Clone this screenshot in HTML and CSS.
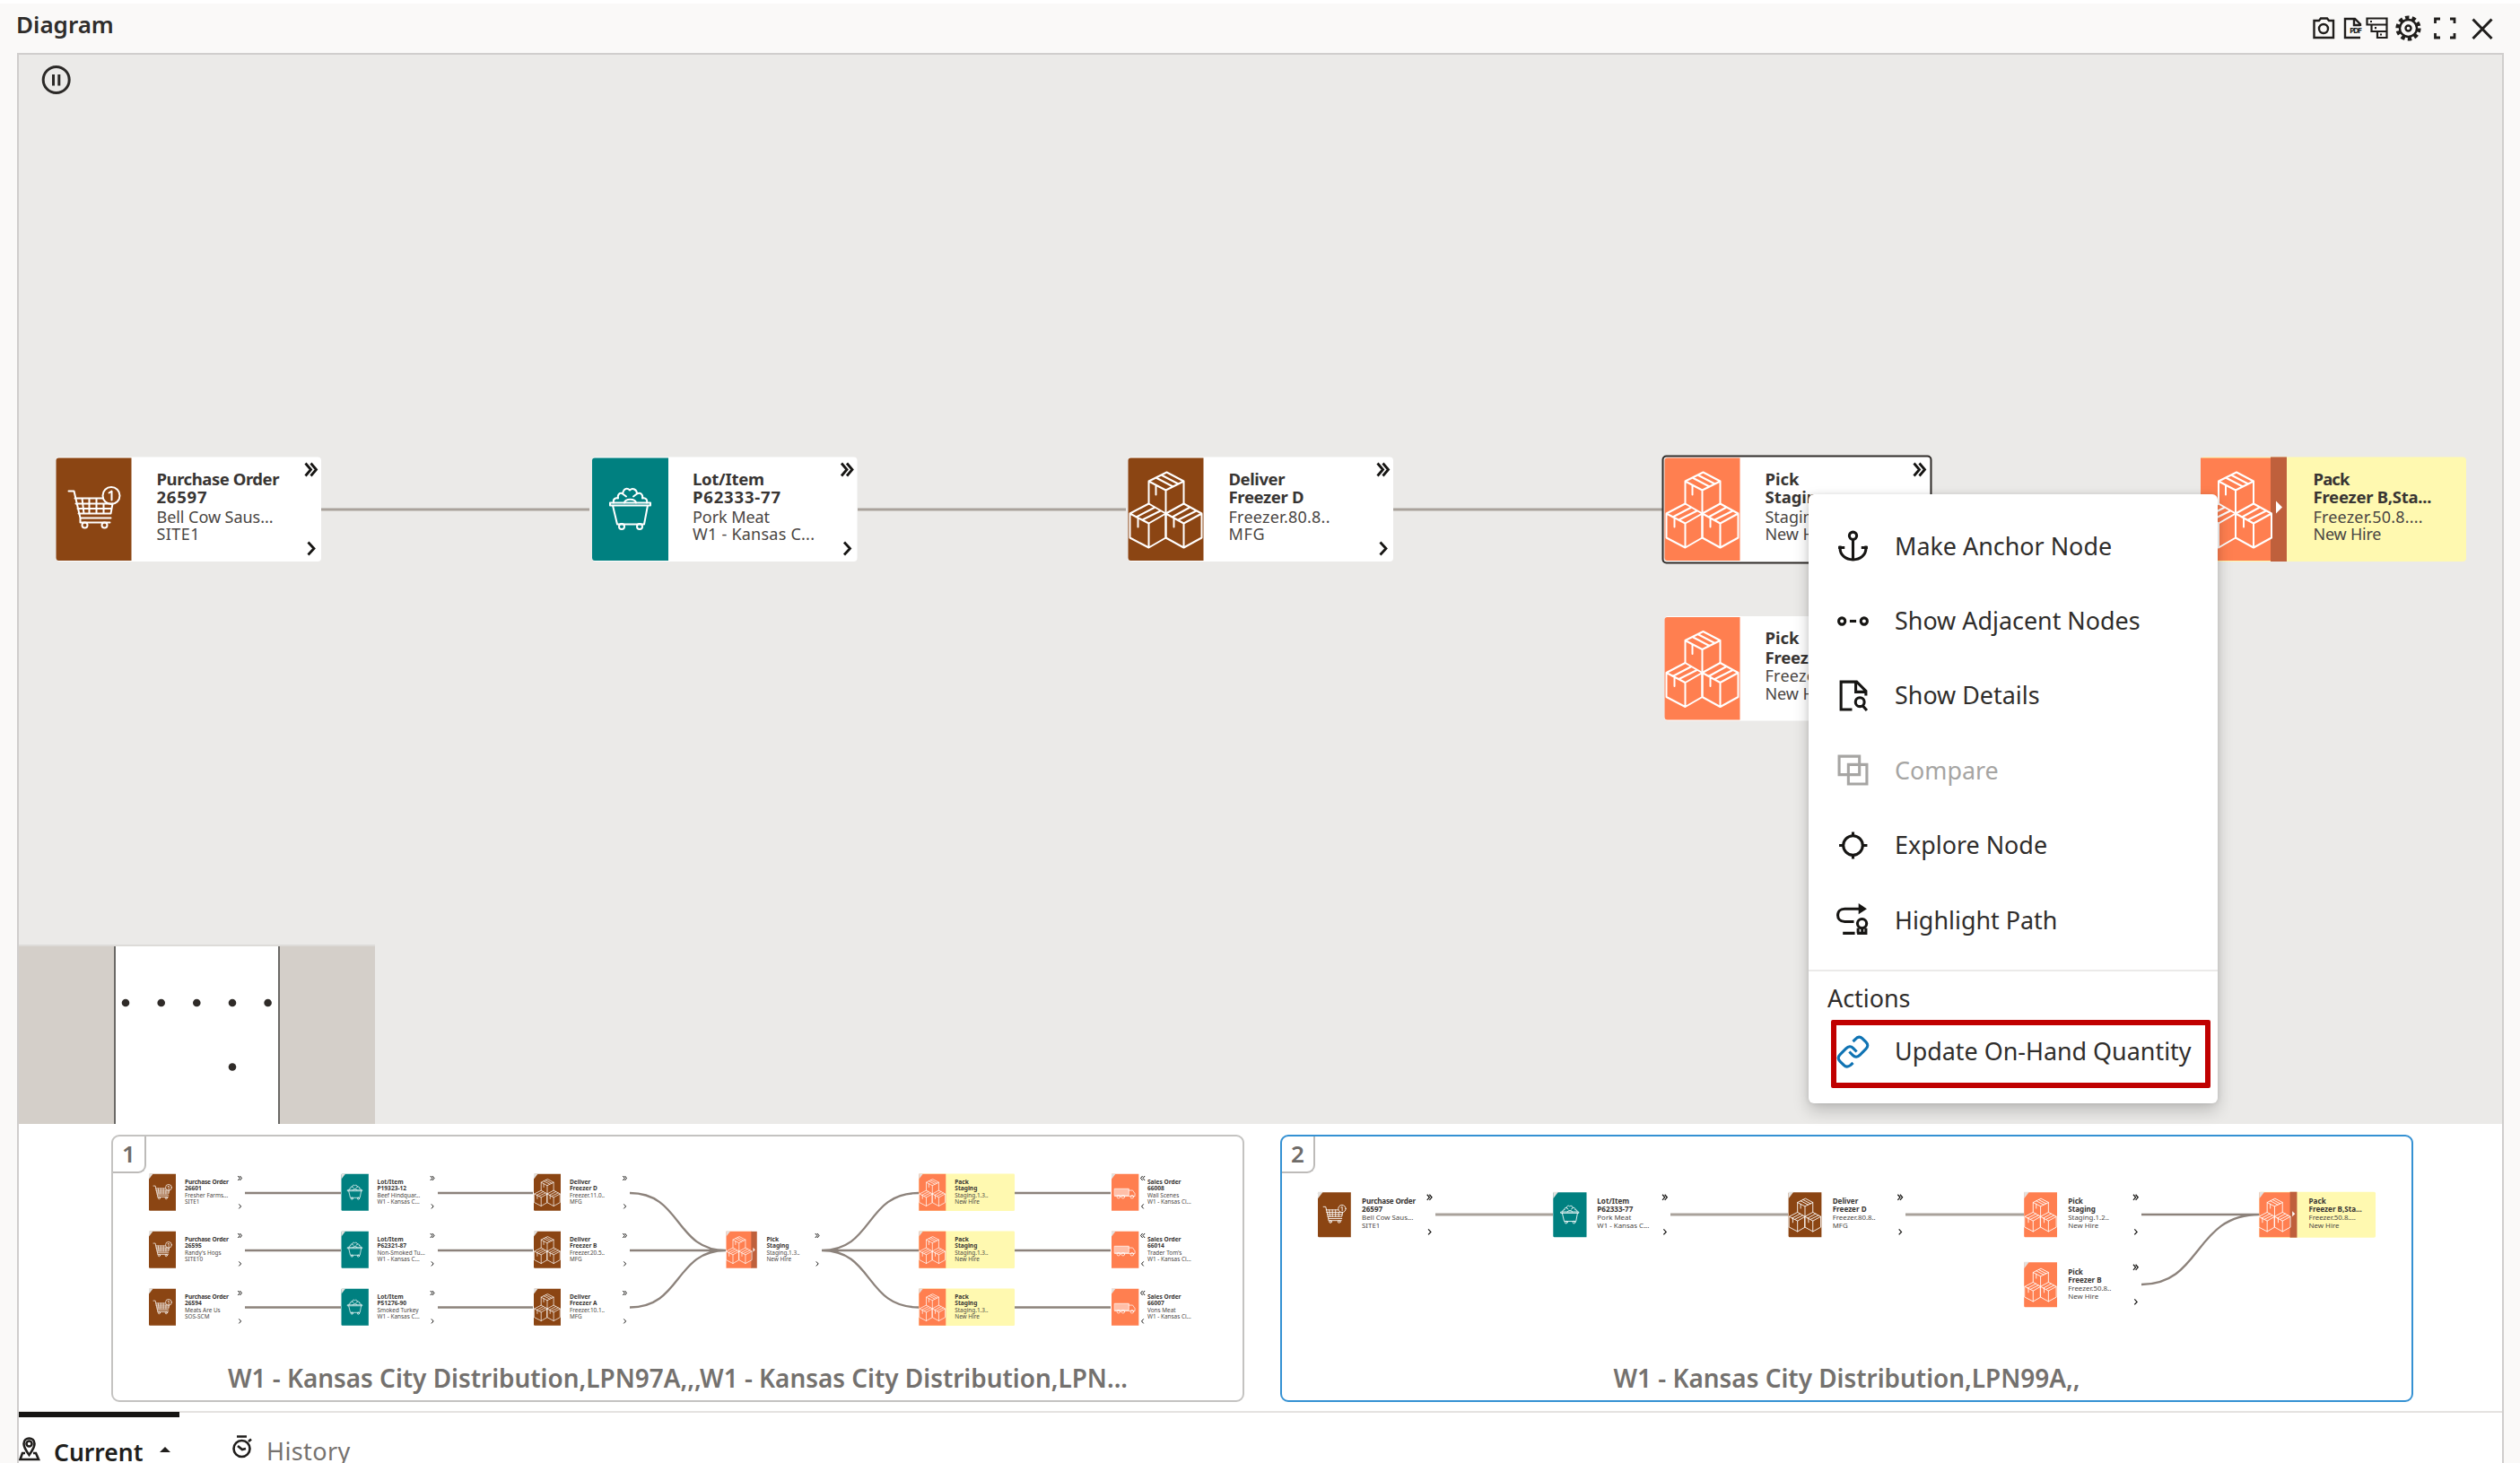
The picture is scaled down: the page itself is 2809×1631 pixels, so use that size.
FILE: index.html
```html
<!DOCTYPE html>
<html lang="en">
<head>
<meta charset="utf-8">
<title>Diagram</title>
<link rel="stylesheet" href="styles.css">
</head>
<body>
<svg class="defs" width="0" height="0" aria-hidden="true">
  <defs>
    <g id="boxes" class="glyph">
      <path d="M23 52V27L43 17L62 27V52M23 27L42 37L62 27M42 37V63M31 23L50 33M37 20L56 30M31 31V42"/>
      <path d="M2 63L23 52L42 63V90L23 101L2 90ZM2 63L23 74L42 63M23 74V101M9 67L30 56M16 70L36 60M11 68V78"/>
      <path d="M42 63L62 52L82 63V90L62 101L42 90ZM42 63L62 74L82 63M62 74V101M49 67L69 56M56 70L76 60M51 68V78"/>
    </g>
    <g id="cart" class="glyph">
      <path d="M14 38H20L27 68H61M21 46H52M22 52H63M24 57.500H62M25 63H61L63 52M29 46L31 63M37 46V63M45 46V63M53 52V63M27 68V73H60"/>
      <circle cx="32" cy="76" r="3"/><circle cx="54" cy="76" r="3"/>
      <circle cx="61.500" cy="43" r="9.500"/><path d="M59 40L62 38V48"/>
    </g>
    <g id="mine" class="glyph">
      <path d="M20 51H65V54H20ZM23 54L28 75H58L62 54"/>
      <path d="M24 51C23 47 26 45 29 46C28 42 31 39 34 41C35 35 39 34 42 37C45 34 50 36 50 41C54 39 57 42 56 46C60 45 62 48 61 51M36 51C37 46 48 46 49 51M34 41L38 44M50 41L46 44"/>
      <circle cx="33" cy="77.500" r="3"/><circle cx="53" cy="77.500" r="3"/>
    </g>
    <g id="truck" class="glyph">
      <path class="load" d="M10 47H54V68H10Z"/>
      <path d="M54 52H66L73 62V70H10"/>
      <circle cx="22" cy="72" r="5"/><circle cx="36" cy="72" r="5"/><circle cx="64" cy="72" r="5"/>
    </g>
    <g id="next" class="chev"><path d="M278 7L284 14L278 21M284 7L290 14L284 21M281 95L287.500 102L281 109"/></g>
    <g id="prev" class="chev"><path d="M97 7L91 14L97 21M104 7L98 14L104 21M100 95L94 102L100 109"/></g>
    <g id="n-po"><rect class="card" width="295.500" height="116.500" rx="4"/><path class="brown" d="M84 1V115.500H3Q0 115.500 0 112V4Q0 1 3 1Z"/><use href="#cart"/><use href="#next"/></g>
    <g id="n-lot"><rect class="card" width="295.500" height="116.500" rx="4"/><path class="teal" d="M85 1V115.500H3Q0 115.500 0 112V4Q0 1 3 1Z"/><use href="#mine"/><use href="#next"/></g>
    <g id="n-del"><rect class="card" width="295.500" height="116.500" rx="4"/><path class="brown" d="M84 1V115.500H3Q0 115.500 0 112V4Q0 1 3 1Z"/><use href="#boxes"/><use href="#next"/></g>
    <g id="n-pick"><rect class="card" width="295.500" height="116.500" rx="4"/><path class="coral" d="M84 1V115.500H3Q0 115.500 0 112V4Q0 1 3 1Z"/><use href="#boxes"/><use href="#next"/></g>
    <g id="n-pickx"><rect class="card" width="295.500" height="116.500" rx="4"/><path class="coral" d="M0 1H80V115.500H0Z"/><path class="rust" d="M78 1H96V115.500H78Z"/><path class="arrow" d="M84 51L90 58L84 65Z"/><use href="#boxes" transform="translate(-2 0)"/><use href="#next"/></g>
    <g id="n-pack"><rect class="lemon" width="299" height="116.500" rx="4"/><path class="coral" d="M0 1H84V115.500H0Z"/><use href="#boxes"/></g>
    <g id="n-packx"><rect class="lemon" width="296" height="116.500" rx="4"/><path class="coral" d="M0 1H80V115.500H0Z"/><path class="rust" d="M78 0H96V116.500H78Z"/><path class="arrow" d="M84 49L91 56L84 63Z"/><use href="#boxes" transform="translate(-3 0)"/></g>
    <g id="n-so"><rect class="card" width="299" height="116.500" rx="4"/><path class="coral" d="M0 1H85V115.500H0Z"/><use href="#truck"/><use href="#prev"/></g>
    <path id="fold" class="fold" d="M0 0H13L0 17Z"/>
  </defs>
</svg>

<header class="topbar">
  <h1 class="title">Diagram</h1>
  <div class="tools">
    <svg viewBox="2576 16 204 32" width="204" height="32">
      <g class="tool">
        <path d="M2579.500 23H2585L2587 20.500H2594L2596 23H2601V42H2579.500Z"/><circle cx="2590" cy="32" r="5"/>
        <path d="M2631 42H2614V21H2625L2631 27V29M2624 21V28H2631"/>
        <path class="tree" d="M2638.500 20.500H2660.500V42H2650V35H2643.500V27.500H2638.500ZM2643.500 27.500H2660.500M2650 35H2660.500M2642 24H2644M2647 31.200H2649M2653 38.500H2655"/>
        <circle class="gear" cx="2684.500" cy="31.500" r="11.600"/><circle cx="2684.500" cy="31.500" r="9.500"/><circle cx="2684.500" cy="31.500" r="3"/>
        <path class="frame" d="M2714.500 26V21H2720M2731 21H2736V26M2736 37V42H2731M2720 42H2714.500V37"/>
        <path class="close" d="M2756.500 21.500L2777.500 43M2777.500 21.500L2756.500 43"/>
      </g>
      <text class="pdf" x="2619" y="37" textLength="14">PDF</text>
    </svg>
  </div>
</header>

<main class="panel">
  <section class="canvas">
    <svg class="graph" viewBox="21 61 2768 1191" width="2768" height="1191">
      <g class="pause"><circle cx="62.700" cy="89" r="14.500"/><path d="M59.500 83V95.500M65.800 83V95.500"/></g>
      <path class="edge" d="M358 568H657M956 568H1255M1553 568H1853"/>
      <g transform="translate(62.500 509.500)"><use href="#n-po"/>
        <text class="t" x="112" y="31" textLength="137">Purchase Order</text><text class="t" x="112" y="51.500" textLength="56">26597</text><text class="s" x="112" y="73" textLength="130">Bell Cow Saus...</text><text class="s" x="112" y="92.500" textLength="48">SITE1</text></g>
      <g transform="translate(660 509.500)"><use href="#n-lot"/>
        <text class="t" x="112" y="31" textLength="80">Lot/Item</text><text class="t" x="112" y="51.500" textLength="98">P62333-77</text><text class="s" x="112" y="73" textLength="86">Pork Meat</text><text class="s" x="112" y="92.500" textLength="136">W1 - Kansas C...</text></g>
      <g transform="translate(1257.500 509.500)"><use href="#n-del"/>
        <text class="t" x="112" y="31" textLength="63">Deliver</text><text class="t" x="112" y="51.500" textLength="84">Freezer D</text><text class="s" x="112" y="73" textLength="113">Freezer.80.8..</text><text class="s" x="112" y="92.500" textLength="40">MFG</text></g>
      <g transform="translate(1855.500 509.500)"><use href="#n-pick"/><rect class="selected" x="-2" y="-1" width="299" height="119" rx="4"/>
        <text class="t" x="112" y="31" textLength="38">Pick</text><text class="t" x="112" y="51.500" textLength="70">Staging</text><text class="s" x="112" y="73" textLength="104">Staging.1.2..</text><text class="s" x="112" y="92.500" textLength="77">New Hire</text></g>
      <g transform="translate(1855.500 687)"><use href="#n-pick"/>
        <text class="t" x="112" y="31" textLength="38">Pick</text><text class="t" x="112" y="53" textLength="84">Freezer B</text><text class="s" x="112" y="73" textLength="113">Freezer.50.8..</text><text class="s" x="112" y="92.500" textLength="77">New Hire</text></g>
      <g transform="translate(2453 509.500)"><use href="#n-packx"/>
        <text class="t" x="125.500" y="31" textLength="41">Pack</text><text class="t" x="125.500" y="51.500" textLength="132">Freezer B,Sta...</text><text class="s" x="125.500" y="73" textLength="122">Freezer.50.8....</text><text class="s" x="125.500" y="92.500" textLength="76">New Hire</text></g>
    </svg>

    <div class="minimap">
      <svg viewBox="129 1054 181 198" width="181" height="198">
        <circle cx="140" cy="1117" r="4.300"/><circle cx="179.700" cy="1117" r="4.300"/><circle cx="219.300" cy="1117" r="4.300"/><circle cx="259" cy="1117" r="4.300"/><circle cx="298.600" cy="1117" r="4.300"/><circle cx="259" cy="1188.500" r="4.300"/>
      </svg>
    </div>

    <div class="menu">
      <div class="item"><svg viewBox="0 0 36 36"><circle cx="18" cy="7" r="4"/><path d="M18 11V33M4 18V21C4 28 10 33 18 33S32 28 32 21V18M2 20H9M27 20H34"/></svg><span>Make Anchor Node</span></div>
      <div class="item"><svg viewBox="0 0 36 36"><circle cx="6" cy="18" r="3.500"/><circle cx="30" cy="18" r="3.500"/><path d="M14.500 18H21.500"/></svg><span>Show Adjacent Nodes</span></div>
      <div class="item"><svg viewBox="0 0 36 36"><path d="M17 33H5V3H22L32 13V18M21 3V14H32"/><circle cx="25.500" cy="25" r="4.800"/><path d="M28.500 29L33 34"/></svg><span>Show Details</span></div>
      <div class="item off"><svg viewBox="0 0 36 36"><path d="M3 3H25V23H3ZM13 12H33V33H13Z"/></svg><span>Compare</span></div>
      <div class="item"><svg viewBox="0 0 36 36"><circle cx="18" cy="18" r="10.500"/><path d="M18 3.500V8M18 28V32.500M3 18H8M28 18H33.500"/></svg><span>Explore Node</span></div>
      <div class="item"><svg viewBox="0 0 36 36"><path d="M26 6H9C-1 6-1 20 9 20H19M7 32.500H20M23.500 32.500V27M32 32.500V27M22.500 32.500H33.500M28 28V32"/><path class="solid" d="M24 0L33 6L24 12Z"/><circle cx="27.800" cy="22" r="5"/></svg><span>Highlight Path</span></div>
      <div class="group">
        <div class="heading">Actions</div>
        <div class="item link"><svg viewBox="0 0 36 36"><path d="M18 7L21 4C23 1.500 26 1.500 28 3.500L32 7.500C34.500 10 34.500 12.500 32 15L25.500 21.500C23 24 20 24 18 22L14 18M18 30L15.500 32.500C13 34.500 10 34.500 8 32.500L4 28.500C1.500 26 1.500 23.500 4 21L10.500 14.500C13 12 16 12 18 14L22 18"/></svg><span>Update On-Hand Quantity</span></div>
      </div>
      <div class="callout"></div>
    </div>
  </section>

  <section class="paths">
    <article class="path">
      <span class="badge">1</span>
      <svg viewBox="126 1268 1259 246" width="1259" height="246">
        <path class="thin" d="M273 1331H380M273 1395H380M273 1458.500H380M488 1331H594M488 1395H594M488 1458.500H594M702 1331C760 1331 752 1395 809 1395M702 1395H809M702 1458.500C760 1458.500 752 1395 809 1395M916 1395C974 1395 964 1331 1024 1331M916 1395H1024M916 1395C974 1395 964 1458.500 1024 1458.500M1131 1331H1238M1131 1395H1238M1131 1458.500H1238"/>
        <g transform="translate(166 1309.500) scale(.357)"><use href="#n-po"/><use href="#fold"/><text class="t" x="112" y="32" textLength="137">Purchase Order</text><text class="t" x="112" y="53">26601</text><text class="s" x="112" y="74">Fresher Farms...</text><text class="s" x="112" y="94">SITE1</text></g>
        <g transform="translate(166 1373.500) scale(.357)"><use href="#n-po"/><use href="#fold"/><text class="t" x="112" y="32" textLength="137">Purchase Order</text><text class="t" x="112" y="53">26595</text><text class="s" x="112" y="74">Randy's Hogs</text><text class="s" x="112" y="94">SITE10</text></g>
        <g transform="translate(166 1437.500) scale(.357)"><use href="#n-po"/><use href="#fold"/><text class="t" x="112" y="32" textLength="137">Purchase Order</text><text class="t" x="112" y="53">26594</text><text class="s" x="112" y="74">Meats Are Us</text><text class="s" x="112" y="94">SOS-SCM</text></g>
        <g transform="translate(380.500 1309.500) scale(.357)"><use href="#n-lot"/><use href="#fold"/><text class="t" x="112" y="32">Lot/Item</text><text class="t" x="112" y="53">P19323-12</text><text class="s" x="112" y="74">Beef Hindquar...</text><text class="s" x="112" y="94">W1 - Kansas C...</text></g>
        <g transform="translate(380.500 1373.500) scale(.357)"><use href="#n-lot"/><use href="#fold"/><text class="t" x="112" y="32">Lot/Item</text><text class="t" x="112" y="53">P62321-87</text><text class="s" x="112" y="74">Non-Smoked Tu...</text><text class="s" x="112" y="94">W1 - Kansas C...</text></g>
        <g transform="translate(380.500 1437.500) scale(.357)"><use href="#n-lot"/><use href="#fold"/><text class="t" x="112" y="32">Lot/Item</text><text class="t" x="112" y="53">P51276-90</text><text class="s" x="112" y="74">Smoked Turkey</text><text class="s" x="112" y="94">W1 - Kansas C...</text></g>
        <g transform="translate(595 1309.500) scale(.357)"><use href="#n-del"/><use href="#fold"/><text class="t" x="112" y="32">Deliver</text><text class="t" x="112" y="53">Freezer D</text><text class="s" x="112" y="74">Freezer.11.0..</text><text class="s" x="112" y="94">MFG</text></g>
        <g transform="translate(595 1373.500) scale(.357)"><use href="#n-del"/><use href="#fold"/><text class="t" x="112" y="32">Deliver</text><text class="t" x="112" y="53">Freezer B</text><text class="s" x="112" y="74">Freezer.20.5..</text><text class="s" x="112" y="94">MFG</text></g>
        <g transform="translate(595 1437.500) scale(.357)"><use href="#n-del"/><use href="#fold"/><text class="t" x="112" y="32">Deliver</text><text class="t" x="112" y="53">Freezer A</text><text class="s" x="112" y="74">Freezer.10.1..</text><text class="s" x="112" y="94">MFG</text></g>
        <g transform="translate(809.500 1373.500) scale(.357)"><use href="#n-pickx"/><use href="#fold"/><text class="t" x="126" y="32">Pick</text><text class="t" x="126" y="53">Staging</text><text class="s" x="126" y="74">Staging.1.3..</text><text class="s" x="126" y="94">New Hire</text></g>
        <g transform="translate(1024.300 1309.500) scale(.357)"><use href="#n-pack"/><use href="#fold"/><text class="t" x="112" y="32">Pack</text><text class="t" x="112" y="53">Staging</text><text class="s" x="112" y="74">Staging.1.3..</text><text class="s" x="112" y="94">New Hire</text></g>
        <g transform="translate(1024.300 1373.500) scale(.357)"><use href="#n-pack"/><use href="#fold"/><text class="t" x="112" y="32">Pack</text><text class="t" x="112" y="53">Staging</text><text class="s" x="112" y="74">Staging.1.3..</text><text class="s" x="112" y="94">New Hire</text></g>
        <g transform="translate(1024.300 1437.500) scale(.357)"><use href="#n-pack"/><use href="#fold"/><text class="t" x="112" y="32">Pack</text><text class="t" x="112" y="53">Staging</text><text class="s" x="112" y="74">Staging.1.3..</text><text class="s" x="112" y="94">New Hire</text></g>
        <g transform="translate(1239 1309.500) scale(.357)"><use href="#n-so"/><use href="#fold"/><text class="t" x="112" y="32">Sales Order</text><text class="t" x="112" y="53">66008</text><text class="s" x="112" y="74">Wall Scenes</text><text class="s" x="112" y="94">W1 - Kansas Ci...</text></g>
        <g transform="translate(1239 1373.500) scale(.357)"><use href="#n-so"/><use href="#fold"/><text class="t" x="112" y="32">Sales Order</text><text class="t" x="112" y="53">66014</text><text class="s" x="112" y="74">Trader Tom's</text><text class="s" x="112" y="94">W1 - Kansas Ci...</text></g>
        <g transform="translate(1239 1437.500) scale(.357)"><use href="#n-so"/><use href="#fold"/><text class="t" x="112" y="32">Sales Order</text><text class="t" x="112" y="53">66007</text><text class="s" x="112" y="74">Vons Meat</text><text class="s" x="112" y="94">W1 - Kansas Ci...</text></g>
      </svg>
      <p class="caption">W1 - Kansas City Distribution,LPN97A,,,W1 - Kansas City Distribution,LPN...</p>
    </article>
    <article class="path current">
      <span class="badge">2</span>
      <svg viewBox="1429 1268 1259 246" width="1259" height="246">
        <path class="thin" d="M2387 1355H2519M2387 1433C2455 1433 2445 1355 2519 1355"/>
        <path class="edge" d="M1600 1355H1731M1862 1355H1993M2124 1355H2256"/>
        <g transform="translate(1469 1329.700) scale(.438)"><use href="#n-po"/><use href="#fold"/><text class="t" x="112" y="30" textLength="137">Purchase Order</text><text class="t" x="112" y="51">26597</text><text class="s" x="112" y="72">Bell Cow Saus...</text><text class="s" x="112" y="92">SITE1</text></g>
        <g transform="translate(1731.300 1329.700) scale(.438)"><use href="#n-lot"/><use href="#fold"/><text class="t" x="112" y="30">Lot/Item</text><text class="t" x="112" y="51">P62333-77</text><text class="s" x="112" y="72">Pork Meat</text><text class="s" x="112" y="92">W1 - Kansas C...</text></g>
        <g transform="translate(1993.600 1329.700) scale(.438)"><use href="#n-del"/><use href="#fold"/><text class="t" x="112" y="30">Deliver</text><text class="t" x="112" y="51">Freezer D</text><text class="s" x="112" y="72">Freezer.80.8..</text><text class="s" x="112" y="92">MFG</text></g>
        <g transform="translate(2256.200 1329.700) scale(.438)"><use href="#n-pick"/><use href="#fold"/><text class="t" x="112" y="30">Pick</text><text class="t" x="112" y="51">Staging</text><text class="s" x="112" y="72">Staging.1.2..</text><text class="s" x="112" y="92">New Hire</text></g>
        <g transform="translate(2256.200 1407.700) scale(.438)"><use href="#n-pick"/><use href="#fold"/><text class="t" x="112" y="32">Pick</text><text class="t" x="112" y="53">Freezer B</text><text class="s" x="112" y="74">Freezer.50.8..</text><text class="s" x="112" y="94">New Hire</text></g>
        <g transform="translate(2518.400 1329.700) scale(.438)"><use href="#n-packx"/><use href="#fold"/><text class="t" x="126" y="30">Pack</text><text class="t" x="126" y="51">Freezer B,Sta...</text><text class="s" x="126" y="72">Freezer.50.8....</text><text class="s" x="126" y="92">New Hire</text></g>
      </svg>
      <p class="caption">W1 - Kansas City Distribution,LPN99A,,</p>
    </article>
  </section>

  <nav class="tabs">
    <div class="tab active">
      <svg viewBox="22 1603 24 28" width="24" height="28"><path d="M33.500 1624C29 1618 27.500 1615 27.500 1611.500C27.500 1603.500 39.500 1603.500 39.500 1611.500C39.500 1615 38 1618 33.500 1624ZM29 1622H26L23.500 1629H44L41 1622H38"/><circle cx="33.500" cy="1611.500" r="3"/></svg>
      <span>Current</span><i class="caret"></i>
    </div>
    <div class="tab">
      <svg viewBox="258 1601 24 28" width="24" height="28"><circle cx="269.500" cy="1617" r="9"/><path d="M264 1603.500H275M277 1609L280 1606.500M265 1614L270 1618L274 1617"/></svg>
      <span>History</span>
    </div>
  </nav>
</main>
</body>
</html>
```
FILE: styles.css
```css
* { box-sizing: border-box; }
html, body { height: 100%; }
body {
  margin: 0;
  width: 2809px;
  height: 1631px;
  overflow: hidden;
  display: flex;
  flex-direction: column;
  background: #faf9f8;
  border-top: 4px solid #fff;
  color: #2f2d2b;
  font-family: "Noto Sans", "Open Sans", sans-serif;
}
svg { display: block; flex: none; }
.defs { position: absolute; }

.topbar {
  flex: none;
  height: 55px;
  padding: 0 29px 0 18px;
  display: flex;
  justify-content: space-between;
  align-items: flex-start;
}
.title { margin: 5px 0 0; font-size: 26px; line-height: 36px; font-weight: 600; }
.tools { padding-top: 12px; }
.tool { fill: none; stroke: #201e1c; stroke-width: 2.4; }
.tool .tree { stroke-width: 2.2; }
.tool .gear { stroke-width: 5; stroke-dasharray: 4.2 3.088; }
.tool .close { stroke-width: 3; }
.tool .frame { stroke-width: 2.8; }
.pdf { font-size: 9px; font-weight: 700; fill: #201e1c; }

.panel {
  flex: 1;
  width: 2772px;
  margin-left: 19px;
  display: flex;
  flex-direction: column;
  background: #fff;
  border: 2px solid #d0cecd;
  border-bottom: 0;
}
.canvas { position: relative; flex: none; height: 1192px; background: #ebeae8; }
.card { fill: #fff; }
.brown { fill: #8b4513; }
.teal { fill: #008080; }
.coral { fill: #ff7f50; }
.rust { fill: #bf603c; }
.lemon { fill: #fff9b0; }
.arrow { fill: #fff; }
.fold { fill: #e4e2df; }
.glyph { fill: none; stroke: #fff; stroke-width: 2; stroke-linejoin: round; stroke-linecap: round; }
.glyph .load { fill: rgba(255, 255, 255, .5); }
.chev { fill: none; stroke: #161513; stroke-width: 2.8; }
.edge { fill: none; stroke: #a9a29b; stroke-width: 3; }
.thin { fill: none; stroke: #8c827b; stroke-width: 2.3; }
.selected { fill: none; stroke: #312d2a; stroke-width: 2; }
.pause { fill: none; stroke: #2b2927; stroke-width: 3; }
.t { font-size: 18.5px; font-weight: 700; fill: #383533; }
.s { font-size: 18px; fill: #4a4643; }

.minimap {
  position: absolute;
  left: 0;
  bottom: 0;
  width: 397px;
  height: 200px;
  padding-left: 106px;
  background: #d4cfc9;
  border-top: 2px solid #dddbd8;
}
.minimap svg { box-sizing: content-box; background: #fff; border: solid #6b6966; border-width: 0 2px; fill: #2f2b28; }

.menu {
  position: absolute;
  left: 1995px;
  top: 490px;
  width: 456px;
  height: 679px;
  padding-top: 16px;
  background: #fff;
  border-radius: 6px;
  box-shadow: 0 8px 18px rgba(0, 0, 0, .2), 0 0 6px rgba(0, 0, 0, .1);
  font-size: 26.9px;
}
.item { height: 83.4px; padding-left: 31px; display: flex; align-items: center; gap: 28px; }
.item svg { width: 37px; height: 37px; fill: none; stroke: #161513; stroke-width: 3; }
.item span { white-space: nowrap; margin-top: -1px; }
.item .solid { fill: #161513; stroke: none; }
.item.off { color: #a6a5a3; }
.item.off svg { stroke: #a6a5a3; }
.group { margin-top: 14px; border-top: 2px solid #ebeae9; }
.heading { padding: 12px 0 0 21px; line-height: 36px; }
.link { height: 82px; }
.link svg { stroke: #0f73b3; }
.callout { position: absolute; left: 25px; top: 586px; width: 423px; height: 76px; border: 6px solid #c00000; border-radius: 2px; }

.paths { flex: none; height: 320px; padding: 12px 0 0 103px; display: flex; gap: 40px; }
.path { position: relative; width: 1263px; height: 298px; border: 2px solid #c4c3c1; border-radius: 9px; }
.path.current { border-color: #3591d3; }
.badge {
  position: absolute;
  left: 0;
  top: 0;
  width: 37px;
  height: 41px;
  line-height: 39px;
  text-align: center;
  font-size: 26px;
  font-weight: 600;
  color: #6f6c69;
  border: solid #bdbbb9;
  border-width: 0 2px 2px 0;
  border-bottom-right-radius: 9px;
}
.caption { margin: 5px 0 0; line-height: 36px; text-align: center; white-space: nowrap; font-size: 27.9px; font-weight: 600; color: #74716e; }

.tabs { flex: 1; display: flex; border-top: 2px solid #e4e2e0; font-size: 27px; }
.tab { display: flex; align-items: flex-start; padding: 24px 0 0 58px; color: #76726f; }
.tab svg { fill: none; stroke: #201e1c; stroke-width: 2.6; }
.tab span { line-height: 32px; margin: 3px 0 0 15px; letter-spacing: .4px; }
.tab.active { width: 179px; margin-top: -1px; padding: 21px 0 0 0; border-top: 6px solid #161513; color: #201e1c; }
.tab.active span { font-size: 26.500px; font-weight: 600; letter-spacing: 0; margin-top: 2px; }
.caret { margin: 12px 0 0 19px; border: 6px solid transparent; border-top: 0; border-bottom: 6px solid #201e1c; }
```
